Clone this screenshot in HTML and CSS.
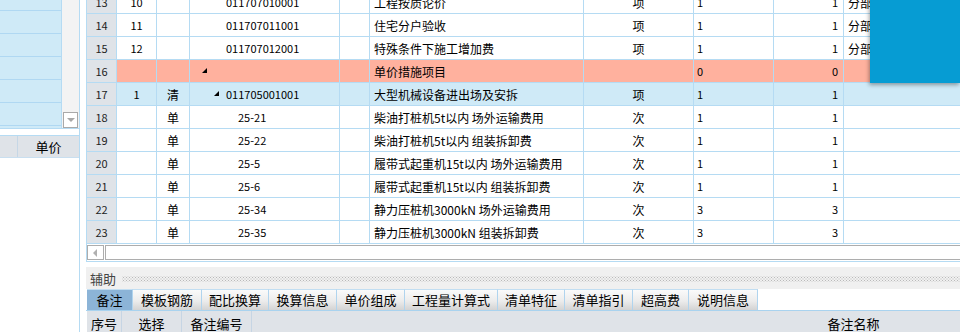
FILE: index.html
```html
<!DOCTYPE html>
<html lang="zh-CN">
<head>
    <meta charset="UTF-8">
    <title>分部分项</title>
    <link rel="stylesheet" href="styles.css">
</head>
<body>
    <div class="app">
        <aside class="side">
            <div class="side-list">
                <div class="side-rows">
                    <div class="side-row"></div>
                    <div class="side-row"></div>
                    <div class="side-row"></div>
                    <div class="side-row"></div>
                    <div class="side-row"></div>
                    <div class="side-row"></div>
                    <div class="side-row"></div>
                </div>
                <div class="vscroll"><span class="vscroll-btn"></span></div>
            </div>
            <div class="side-head">
                <div class="side-cell first"></div>
                <div class="side-cell">单价</div>
            </div>
        </aside>

        <main class="work">
            <div class="grid-pane">
                <div class="grid-body">
                    <div class="row">
                        <div class="cell rh num">13</div>
                        <div class="cell center num">10</div>
                        <div class="cell center"></div>
                        <div class="cell code lv3 num">011707010001</div>
                        <div class="cell"></div>
                        <div class="cell name">工程按质论价</div>
                        <div class="cell center">项</div>
                        <div class="cell qty num">1</div>
                        <div class="cell amt num">1</div>
                        <div class="cell part">分部分项</div>
                    </div>
                    <div class="row">
                        <div class="cell rh num">14</div>
                        <div class="cell center num">11</div>
                        <div class="cell center"></div>
                        <div class="cell code lv3 num">011707011001</div>
                        <div class="cell"></div>
                        <div class="cell name">住宅分户验收</div>
                        <div class="cell center">项</div>
                        <div class="cell qty num">1</div>
                        <div class="cell amt num">1</div>
                        <div class="cell part">分部分项</div>
                    </div>
                    <div class="row">
                        <div class="cell rh num">15</div>
                        <div class="cell center num">12</div>
                        <div class="cell center"></div>
                        <div class="cell code lv3 num">011707012001</div>
                        <div class="cell"></div>
                        <div class="cell name">特殊条件下施工增加费</div>
                        <div class="cell center">项</div>
                        <div class="cell qty num">1</div>
                        <div class="cell amt num">1</div>
                        <div class="cell part">分部分项</div>
                    </div>
                    <div class="row row-group">
                        <div class="cell rh num">16</div>
                        <div class="cell center"></div>
                        <div class="cell center"></div>
                        <div class="cell code lv1"><span class="tri"></span></div>
                        <div class="cell"></div>
                        <div class="cell name">单价措施项目</div>
                        <div class="cell center"></div>
                        <div class="cell qty num">0</div>
                        <div class="cell amt num">0</div>
                        <div class="cell part"></div>
                    </div>
                    <div class="row row-current">
                        <div class="cell rh num">17</div>
                        <div class="cell center num">1</div>
                        <div class="cell center">清</div>
                        <div class="cell code lv2 num"><span class="tri"></span>011705001001</div>
                        <div class="cell"></div>
                        <div class="cell name">大型机械设备进出场及安拆</div>
                        <div class="cell center">项</div>
                        <div class="cell qty num">1</div>
                        <div class="cell amt num">1</div>
                        <div class="cell part"></div>
                    </div>
                    <div class="row">
                        <div class="cell rh num">18</div>
                        <div class="cell center"></div>
                        <div class="cell center">单</div>
                        <div class="cell code lv4 num">25-21</div>
                        <div class="cell"></div>
                        <div class="cell name">柴油打桩机5t以内 场外运输费用</div>
                        <div class="cell center">次</div>
                        <div class="cell qty num">1</div>
                        <div class="cell amt num">1</div>
                        <div class="cell part"></div>
                    </div>
                    <div class="row">
                        <div class="cell rh num">19</div>
                        <div class="cell center"></div>
                        <div class="cell center">单</div>
                        <div class="cell code lv4 num">25-22</div>
                        <div class="cell"></div>
                        <div class="cell name">柴油打桩机5t以内 组装拆卸费</div>
                        <div class="cell center">次</div>
                        <div class="cell qty num">1</div>
                        <div class="cell amt num">1</div>
                        <div class="cell part"></div>
                    </div>
                    <div class="row">
                        <div class="cell rh num">20</div>
                        <div class="cell center"></div>
                        <div class="cell center">单</div>
                        <div class="cell code lv4 num">25-5</div>
                        <div class="cell"></div>
                        <div class="cell name">履带式起重机15t以内 场外运输费用</div>
                        <div class="cell center">次</div>
                        <div class="cell qty num">1</div>
                        <div class="cell amt num">1</div>
                        <div class="cell part"></div>
                    </div>
                    <div class="row">
                        <div class="cell rh num">21</div>
                        <div class="cell center"></div>
                        <div class="cell center">单</div>
                        <div class="cell code lv4 num">25-6</div>
                        <div class="cell"></div>
                        <div class="cell name">履带式起重机15t以内 组装拆卸费</div>
                        <div class="cell center">次</div>
                        <div class="cell qty num">1</div>
                        <div class="cell amt num">1</div>
                        <div class="cell part"></div>
                    </div>
                    <div class="row">
                        <div class="cell rh num">22</div>
                        <div class="cell center"></div>
                        <div class="cell center">单</div>
                        <div class="cell code lv4 num">25-34</div>
                        <div class="cell"></div>
                        <div class="cell name">静力压桩机3000kN 场外运输费用</div>
                        <div class="cell center">次</div>
                        <div class="cell qty num">3</div>
                        <div class="cell amt num">3</div>
                        <div class="cell part"></div>
                    </div>
                    <div class="row">
                        <div class="cell rh num">23</div>
                        <div class="cell center"></div>
                        <div class="cell center">单</div>
                        <div class="cell code lv4 num">25-35</div>
                        <div class="cell"></div>
                        <div class="cell name">静力压桩机3000kN 组装拆卸费</div>
                        <div class="cell center">次</div>
                        <div class="cell qty num">3</div>
                        <div class="cell amt num">3</div>
                        <div class="cell part"></div>
                    </div>
                </div>
                <div class="hscroll">
                    <span class="hscroll-btn"></span>
                    <span class="hscroll-thumb"></span>
                </div>
            </div>

            <div class="aux">
                <div class="aux-bar">
                    <span class="aux-title">辅助</span>
                    <span class="dots"></span>
                </div>
                <div class="tabs">
                    <div class="tab active" style="width: 46px">备注</div>
                    <div class="tab" style="width: 69px">模板钢筋</div>
                    <div class="tab" style="width: 67px">配比换算</div>
                    <div class="tab" style="width: 68px">换算信息</div>
                    <div class="tab" style="width: 68px">单价组成</div>
                    <div class="tab" style="width: 93px">工程量计算式</div>
                    <div class="tab" style="width: 67px">清单特征</div>
                    <div class="tab" style="width: 68px">清单指引</div>
                    <div class="tab" style="width: 56px">超高费</div>
                    <div class="tab" style="width: 69px">说明信息</div>
                </div>
                <div class="note-head">
                    <div class="note-cell" style="width: 35px">序号</div>
                    <div class="note-cell" style="width: 60px">选择</div>
                    <div class="note-cell" style="width: 70px">备注编号</div>
                    <div class="note-cell" style="width: 1204px">备注名称</div>
                </div>
            </div>
        </main>

        <div class="float-panel"></div>
    </div>
</body>
</html>
```

FILE: styles.css
```css
* {
    box-sizing: border-box;
}

body {
    margin: 0;
    font-family: "Noto Sans CJK SC", "Liberation Sans", sans-serif;
    font-size: 12px;
    color: #000000;
    background-color: #ffffff;
    overflow: hidden;
}

.app {
    position: relative;
    display: flex;
    width: 960px;
    height: 332px;
    overflow: hidden;
}

/* left pane */

.side {
    flex: none;
    width: 80px;
    border-right: 1px solid #b5dbf3;
}

.side-list {
    display: flex;
    height: 129px;
    border-bottom: 1px solid #b5dbf3;
    overflow: hidden;
}

.side-rows {
    width: 62px;
    margin-top: -12px;
    border-right: 1px solid #b5dbf3;
    background-color: #cfeaf7;
}

.side-row {
    height: 23px;
    border-bottom: 1px solid #b0d8f2;
}

.vscroll {
    flex: 1;
    display: flex;
    flex-direction: column;
    justify-content: flex-end;
    align-items: center;
    background-color: #f3f3f3;
}

.vscroll-btn {
    width: 15px;
    height: 16px;
    border: 1px solid #a9a9a9;
    background-color: #ffffff;
    position: relative;
}

.vscroll-btn::after {
    content: "";
    position: absolute;
    left: 3px;
    top: 5px;
    border-left: 4px solid transparent;
    border-right: 4px solid transparent;
    border-top: 4px solid #a8a8a8;
}

.side-head {
    display: flex;
    height: 23px;
    margin-top: 6px;
    border-top: 1px solid #b5dbf3;
    border-bottom: 1px solid #c9dff0;
    background-color: #dfe3e8;
}

.side-cell {
    flex: 1;
    display: flex;
    align-items: center;
    justify-content: center;
    font-size: 13px;
}

.side-cell.first {
    flex: none;
    width: 18px;
    border-right: 1px solid #c6d7e6;
}

/* main grid */

.work {
    flex: 1;
    min-width: 0;
    padding-left: 6px;
}

.grid-pane {
    height: 262px;
    border-left: 1px solid #b5dbf3;
    border-bottom: 1px solid #b5dbf3;
    overflow: hidden;
}

.grid-body {
    margin-top: -9px;
}

.row {
    display: grid;
    grid-template-columns: 30px 40px 33px 150px 30px 214px 110px 80px 70px 1fr;
    height: 23px;
    border-bottom: 1px solid #b5dbf3;
}

.row-group {
    background-color: #ffb19e;
}

.row-current {
    background-color: #cfeaf7;
}

.cell {
    display: flex;
    align-items: center;
    border-right: 1px solid #b5dbf3;
    white-space: nowrap;
    overflow: hidden;
}

.cell.rh {
    justify-content: center;
    background-color: #dfe3e8;
    color: #222222;
}

.num {
    font-size: 11px;
}

.center {
    justify-content: center;
}

.code.lv1 { padding-left: 12px; }
.code.lv2 { padding-left: 24px; }
.code.lv3 { padding-left: 36px; }
.code.lv4 { padding-left: 48px; }

.tri {
    width: 0;
    height: 0;
    margin-right: 7px;
    margin-top: -2px;
    border-left: 5px solid transparent;
    border-bottom: 5px solid #000000;
}

.name {
    padding-left: 4px;
}

.qty {
    padding-left: 3px;
}

.amt {
    justify-content: flex-end;
    padding-right: 5px;
}

.part {
    padding-left: 4px;
    border-right: none;
}

.hscroll {
    display: flex;
    height: 17px;
    padding: 1px 0;
}

.hscroll-btn {
    flex: none;
    width: 17px;
    border: 1px solid #adadad;
    background-color: #ffffff;
    position: relative;
}

.hscroll-btn::after {
    content: "";
    position: absolute;
    left: 5px;
    top: 3px;
    border-top: 4px solid transparent;
    border-bottom: 4px solid transparent;
    border-right: 4px solid #b0b0b0;
}

.hscroll-thumb {
    flex: 1;
    margin-left: 1px;
    border: 1px solid #adadad;
    border-right: none;
    background-color: #ffffff;
}

/* auxiliary panel */

.aux {
    margin-top: 5px;
}

.aux-bar {
    display: flex;
    align-items: center;
    height: 22px;
    padding-left: 4px;
    background-color: #f0f0f0;
}

.aux-title {
    color: #444444;
    font-size: 13px;
}

.dots {
    flex: 1;
    height: 6px;
    margin-left: 6px;
    margin-top: 1px;
    background-image:
        radial-gradient(circle, #b9b9b9 0.7px, transparent 1px),
        radial-gradient(circle, #b9b9b9 0.7px, transparent 1px);
    background-size: 3px 3px;
    background-position: 0 0, 1.5px 1.5px;
}

.tabs {
    display: flex;
    height: 22px;
    padding-left: 1px;
    border-bottom: 1px solid #a9d3ef;
}

.tab {
    display: flex;
    align-items: center;
    justify-content: center;
    padding-bottom: 1px;
    border-top: 1px solid #c2def2;
    border-right: 1px solid #b0d4ee;
    background: linear-gradient(#fafafa, #ececec 55%, #d3d3d3);
    font-size: 13px;
}

.tab.active {
    background: #8cb4d7;
}

.note-head {
    display: flex;
    height: 25px;
    margin-left: 1px;
    background-color: #dfe3e8;
}

.note-cell {
    flex: none;
    display: flex;
    align-items: center;
    justify-content: center;
    border-right: 1px solid #c6d5e4;
    font-size: 13px;
}

/* floating blue panel over the grid */

.float-panel {
    position: absolute;
    top: 0;
    right: 0;
    width: 90px;
    height: 83px;
    background-color: #069cd3;
    box-shadow: -1px 2px 4px rgba(0, 0, 0, 0.35);
}
```
